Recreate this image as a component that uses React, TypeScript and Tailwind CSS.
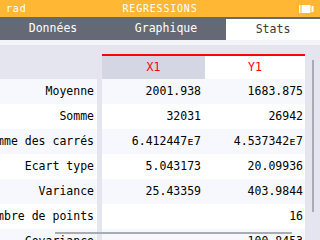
import React from 'react';

interface StatRow {
  label: string;
  x: string;
  y: string;
}

const rows: StatRow[] = [
  { label: 'Moyenne', x: '2001.938', y: '1683.875' },
  { label: 'Somme', x: '32031', y: '26942' },
  { label: 'Somme des carrés', x: '6.412447ᴇ7', y: '4.537342ᴇ7' },
  { label: 'Ecart type', x: '5.043173', y: '20.09936' },
  { label: 'Variance', x: '25.43359', y: '403.9844' },
  { label: 'Nombre de points', x: '', y: '16' },
  { label: 'Covariance', x: '', y: '100.8453' },
];

const tabs = [
  { name: 'Données', w: 'w-[106px]' },
  { name: 'Graphique', w: 'w-[120px]' },
  { name: 'Stats', w: 'w-[94px]' },
];

function Battery() {
  return (
    <svg width="15" height="8" viewBox="0 0 15 8" className="block">
      <rect x="0" y="0" width="1.5" height="8" fill="#fff" />
      <rect x="2.5" y="0" width="9" height="8" fill="#fff" />
      <rect x="12.5" y="1" width="2" height="6" fill="#fff" />
    </svg>
  );
}

export default function App() {
  return (
    <div
      className="relative w-[320px] h-[240px] overflow-hidden bg-[#e5e5ef] text-black"
      style={{ fontFamily: '"DejaVu Sans Mono", "Liberation Mono", monospace' }}
    >
      {/* title bar */}
      <div className="h-[17px] bg-[#ffb734] flex items-center justify-between pl-[6px] pr-[6px] text-white text-[10px] tracking-[0.8px] leading-none">
        <span>rad</span>
        <span className="absolute left-0 right-0 text-center pointer-events-none">REGRESSIONS</span>
        <Battery />
      </div>

      {/* tabs */}
      <div className="h-[23px] bg-[#656975] flex items-end">
        {tabs.map((t, i) => (
          <div
            key={t.name}
            className={`${t.w} flex items-center justify-center text-[11.5px] ${
              i === 2 ? 'h-[21px] bg-white text-[#3a3a3a]' : 'h-[23px] text-white'
            }`}
          >
            {t.name}
          </div>
        ))}
      </div>
      <div className="h-[5px] bg-[#f4f4f8]" />

      <div className="flex">
        <div className="w-[305px] text-[11.5px]">
          {/* header */}
          <div className="flex h-[34px]">
            <div className="w-[102px]" />
            <div className="flex flex-col w-[203px] pt-[9px]">
              <div className="h-[2px] bg-[#ff000c]" />
              <div className="flex flex-1 text-[#ff000c]">
                <div className="w-[103px] bg-[#d4d6e4] flex items-center justify-center">X1</div>
                <div className="w-[100px] bg-white flex items-center justify-center">Y1</div>
              </div>
            </div>
          </div>

          {rows.map((r, i) => {
            const bg = i % 2 === 0 ? 'bg-[#f6f8fd]' : 'bg-white';
            return (
              <div key={r.label} className="flex h-[25px]">
                <div className={`w-[97px] ${bg} flex items-center justify-end pr-[3px] overflow-hidden whitespace-nowrap`}>
                  {r.label}
                </div>
                <div className="w-[5px]" />
                <div className={`w-[103px] ${bg} flex items-center justify-end pr-[4px] whitespace-nowrap`}>
                  {r.x}
                </div>
                <div className={`w-[100px] ${bg} flex items-center justify-end pr-[2px] whitespace-nowrap`}>
                  {r.y}
                </div>
              </div>
            );
          })}
        </div>

        {/* vertical scroll indicator */}
        <div className="w-[15px] pl-[7px] pt-[15px]">
          <div className="w-[2px] h-[152px] bg-[#a9abb3]" />
        </div>
      </div>

      {/* horizontal scroll indicator */}
      <div className="absolute left-[55px] top-[232px] w-[237px] h-[2px] bg-[#a9abb3]" />
    </div>
  );
}
